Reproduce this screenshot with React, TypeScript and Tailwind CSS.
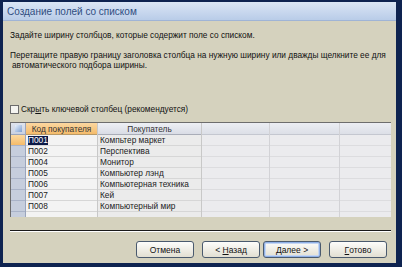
import React from "react";

const rows = [
  ["П001", "Компьтер маркет"],
  ["П002", "Перспектива"],
  ["П004", "Монитор"],
  ["П005", "Компьютер лэнд"],
  ["П006", "Компьютерная техника"],
  ["П007", "Кей"],
  ["П008", "Компьютерный мир"],
];

const Btn = ({
  children,
  focused,
}: {
  children: React.ReactNode;
  focused?: boolean;
}) => (
  <div
    className={`w-[58px] h-[17px] rounded-[3px] border border-[#4a5a6e] bg-gradient-to-b from-[#fdfdfb] to-[#e2dfd2] flex items-center justify-center text-[8.5px] text-[#111] whitespace-pre ${
      focused ? "shadow-[inset_0_0_0_1px_#8fb0e6,inset_0_0_0_2px_#c5d6f2]" : ""
    }`}
  >
    {children}
  </div>
);

export default function App() {
  return (
    <div
      className="w-[402px] h-[267px] bg-[#0e2350] pt-[2px] pl-[3px] pr-[6px] pb-[4px] flex flex-col overflow-hidden"
      style={{ fontFamily: '"Liberation Sans", Arial, sans-serif' }}
    >
      {/* Title bar */}
      <div className="h-[19px] shrink-0 bg-gradient-to-b from-[#dbe6f5] to-[#b9cce8] border-b border-[#9fb4d6] flex items-center pl-[4px] text-[10px] text-[#2f4d80]">
        Создание полей со списком
      </div>

      {/* Body */}
      <div className="flex-1 bg-[#d5d2be] flex flex-col pl-[7px] pr-[5px] text-[8.3px] text-[#111] leading-[10px]">
        <div className="mt-[9px] whitespace-nowrap">
          Задайте ширину столбцов, которые содержит поле со списком.
        </div>
        <div className="mt-[10px] whitespace-nowrap">
          Перетащите правую границу заголовка столбца на нужную ширину или
          дважды щелкните ее для
        </div>
        <div className="pl-[2px]">автоматического подбора ширины.</div>

        {/* Checkbox */}
        <div className="mt-[34px] flex items-center">
          <div className="w-[9px] h-[9px] border border-[#6b6b6b] bg-[#f4f4f0] mr-[2px]" />
          <span>
            Скр<span className="underline">ы</span>ть ключевой столбец
            (рекомендуется)
          </span>
        </div>

        {/* Grid */}
        <div className="mt-[8px] h-[95px] border-t border-l border-[#6d6d6d] bg-[#ebebee] flex overflow-hidden whitespace-nowrap">
          {/* Row selector column */}
          <div className="w-[15px] shrink-0 flex flex-col bg-[#c6cedd] border-r border-[#9aa5bd]">
            <div className="h-[12px] border-b border-[#9aa5bd] bg-gradient-to-b from-[#dfe4ee] to-[#c9d1e2] flex items-center justify-center">
              <div className="w-[7px] h-[7px] bg-gradient-to-br from-[#e8f0fb] to-[#7e9fd0]" />
            </div>
            {rows.map((r, i) => (
              <div
                key={r[0]}
                className={`h-[11px] border-b border-[#a9b3c8] ${
                  i === 0 ? "bg-gradient-to-b from-[#fbd9a0] to-[#f5bb68]" : ""
                }`}
              />
            ))}
          </div>

          {/* Column 1 */}
          <div className="w-[72px] shrink-0 flex flex-col border-r border-[#c8c8c8] bg-[#f3f3f3]">
            <div className="h-[12px] border-b border-[#b99a68] bg-gradient-to-b from-[#fbd7a0] to-[#f4bb6a] flex items-center justify-center text-[#333]">
              Код покупателя
            </div>
            {rows.map((r, i) => (
              <div
                key={r[0]}
                className="h-[11px] border-b border-[#d6d6d6] flex items-center pl-[2px] text-[#222]"
              >
                {i === 0 ? (
                  <span className="bg-[#0b1a48] text-white leading-[9px]">
                    {r[0]}
                  </span>
                ) : (
                  r[0]
                )}
              </div>
            ))}
          </div>

          {/* Column 2 */}
          <div className="w-[104px] shrink-0 flex flex-col border-r border-[#c8c8c8] bg-[#ebebeb]">
            <div className="h-[12px] border-b border-[#a9adb8] bg-gradient-to-b from-[#eef0f5] to-[#d9dce5] flex items-center justify-center text-[#333]">
              Покупатель
            </div>
            {rows.map((r) => (
              <div
                key={r[0]}
                className="h-[11px] border-b border-[#d6d6d6] flex items-center pl-[2px] text-[#222]"
              >
                {r[1]}
              </div>
            ))}
          </div>

          {/* Empty columns */}
          {[68, 70, 60].map((w, c) => (
            <div
              key={c}
              className="shrink-0 flex flex-col border-r border-[#d2d2d6]"
              style={{ width: w }}
            >
              <div className="h-[12px] border-b border-[#c4c7d0] bg-gradient-to-b from-[#eceef3] to-[#dcdfe7]" />
              {rows.map((r) => (
                <div key={r[0]} className="h-[11px] border-b border-[#dcdcdf]" />
              ))}
            </div>
          ))}
        </div>

        {/* Separator */}
        <div className="mt-[13px] border-t border-[#1a1a1a] border-b-white border-b h-[2px]" />

        {/* Buttons */}
        <div className="mt-[9px] flex justify-end pr-[4px]">
          <Btn>Отмена</Btn>
          <div className="w-[8px]" />
          <Btn>
            {"< "}
            <span className="underline">Н</span>азад
          </Btn>
          <div className="w-[3px]" />
          <Btn focused>
            <span className="underline">Д</span>
            {"алее >"}
          </Btn>
          <div className="w-[8px]" />
          <Btn>
            <span className="underline">Г</span>отово
          </Btn>
        </div>
      </div>
    </div>
  );
}
